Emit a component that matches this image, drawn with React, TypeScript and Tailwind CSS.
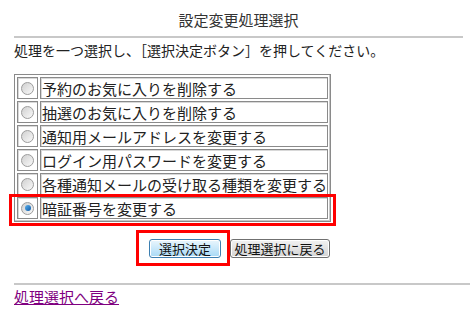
import React from "react";

const items = [
  "予約のお気に入りを削除する",
  "抽選のお気に入りを削除する",
  "通知用メールアドレスを変更する",
  "ログイン用パスワードを変更する",
  "各種通知メールの受け取る種類を変更する",
  "暗証番号を変更する",
];

function Radio({ checked }: { checked: boolean }) {
  return (
    <span className="flex h-[13px] w-[13px] items-center justify-center rounded-full border border-[#9c9c9c] bg-gradient-to-br from-[#d0d0d0] to-[#fafafa]">
      {checked && (
        <span className="h-[6px] w-[6px] rounded-full bg-gradient-to-br from-[#5ab0ec] to-[#0b5aa8]" />
      )}
    </span>
  );
}

function Row({ label, checked }: { label: string; checked: boolean }) {
  return (
    <div className="relative flex h-[22px] gap-[2px]">
      <div className="flex w-[21px] items-center justify-center border border-[#8a8a8a] shadow-[inset_1px_1px_0_#d8d8d8]">
        <Radio checked={checked} />
      </div>
      <div className="flex flex-1 items-center border border-[#8a8a8a] pl-[1px] leading-none text-[15px] text-[#222] shadow-[inset_1px_1px_0_#d8d8d8]">
        {label}
      </div>
      {checked && (
        <span className="pointer-events-none absolute -left-[8px] -right-[8px] -top-[3px] -bottom-[7px] border-[3px] border-[#ff0000]" />
      )}
    </div>
  );
}

export default function App() {
  return (
    <div
      className="h-[322px] w-[470px] overflow-hidden bg-white text-[#222]"
      style={{ fontFamily: '"Noto Sans CJK JP", "Noto Sans", sans-serif' }}
    >
      <div className="ml-[14px] mr-[7px]">
        <h1 className="pt-[10px] text-center text-[15px] leading-[20px] text-[#333]">設定変更処理選択</h1>
        <div className="mt-[6px] border-t-2 border-[#c8c8c8]" />
        <p className="mt-[2px] text-[14px] leading-[20px]">処理を一つ選択し、［選択決定ボタン］を押してください。</p>

        <div className="mt-[14px] flex w-[317px] flex-col gap-[2px] border border-[#8a8a8a] p-[2px] shadow-[inset_-1px_-1px_0_#c8c8c8]">
          {items.map((label, i) => (
            <Row key={label} label={label} checked={i === items.length - 1} />
          ))}
        </div>

        <div className="mt-[17px] flex justify-center gap-[9px] pl-[2px]">
          <div className="relative flex">
            <button className="h-[19px] w-[72px] rounded-[3px] border border-[#3c7fb1] bg-gradient-to-b from-[#eaf6fd] to-[#a7d9f5] text-[13px] leading-none text-[#111] shadow-[inset_0_0_0_1px_#ffffff]">
              選択決定
            </button>
            <span className="pointer-events-none absolute -left-[13px] -right-[9px] -top-[9px] -bottom-[8px] border-[3px] border-[#ff0000]" />
          </div>
          <button className="h-[19px] w-[100px] rounded-[3px] border border-[#707070] bg-gradient-to-b from-[#f2f2f2] to-[#d4d4d4] text-[13px] leading-none text-[#111] shadow-[inset_0_0_0_1px_#ffffff]">
            処理選択に戻る
          </button>
        </div>
      </div>

      <div className="ml-[14px] mt-[25px] border-t-2 border-[#c8c8c8]" />
      <a href="#" className="ml-[14px] mt-[2px] block w-fit text-[15px] leading-[20px] text-[#800080] underline">
        処理選択へ戻る
      </a>
    </div>
  );
}
